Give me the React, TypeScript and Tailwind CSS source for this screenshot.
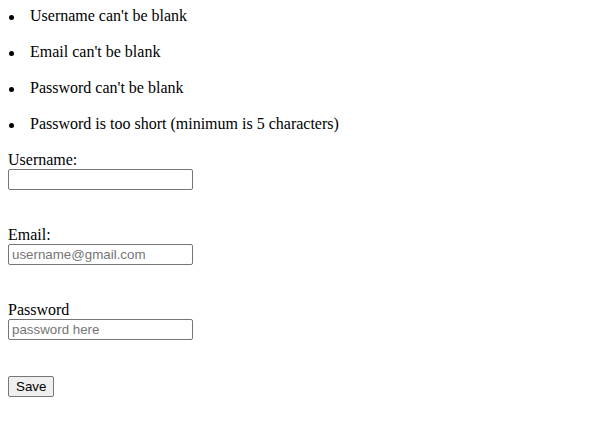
export default function App() {
  const errors = [
    "Username can't be blank",
    "Email can't be blank",
    "Password can't be blank",
    "Password is too short (minimum is 5 characters)",
  ];
  const serif = { fontFamily: '"Liberation Serif", "Times New Roman", serif' };
  const inputCls =
    "block w-[185px] h-[21px] border border-[#767676] rounded-[2px] px-[3px] text-[13.333px] text-black bg-white outline-none placeholder:text-[#757575]";
  const sans = { fontFamily: '"Liberation Sans", Arial, sans-serif' };
  return (
    <div className="min-h-[422px] bg-white text-black text-[16px] leading-[18px]" style={serif}>
      <ul className="pl-[9px] pt-[7px] flex flex-col gap-[18px]">
        {errors.map((e) => (
          <li key={e} className="flex items-center leading-[18px]">
            <span className="w-[5px] h-[5px] rounded-full bg-black mr-[16px] mt-[2px] shrink-0" />
            <span>{e}</span>
          </li>
        ))}
      </ul>
      <div className="px-[8px] pt-[18px] flex flex-col">
        <label className="block leading-[18px]">Username:</label>
        <input className={inputCls} style={sans} type="text" />
        <label className="block leading-[18px] mt-[36px]">Email:</label>
        <input className={inputCls} style={sans} type="text" placeholder="username@gmail.com" />
        <label className="block leading-[18px] mt-[36px]">Password</label>
        <input className={inputCls} style={sans} type="password" placeholder="password here" />
        <div className="mt-[36px]">
          <button
            className="h-[21px] px-[7px] border border-[#767676] rounded-[2px] bg-[#efefef] text-[13.333px] text-black leading-[15px]"
            style={sans}
          >
            Save
          </button>
        </div>
      </div>
    </div>
  );
}
